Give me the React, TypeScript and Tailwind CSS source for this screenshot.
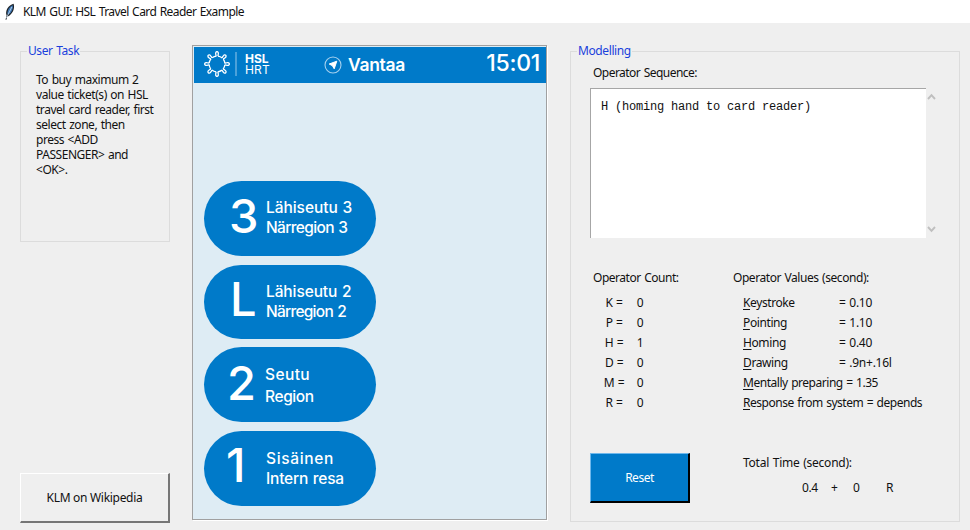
import type { ReactNode } from "react";

const counts = [
  { key: "K", value: 0 },
  { key: "P", value: 0 },
  { key: "H", value: 1 },
  { key: "D", value: 0 },
  { key: "M", value: 0 },
  { key: "R", value: 0 },
];

const values = [
  { first: "K", rest: "eystroke", value: "= 0.10", wide: false },
  { first: "P", rest: "ointing", value: "= 1.10", wide: false },
  { first: "H", rest: "oming", value: "= 0.40", wide: false },
  { first: "D", rest: "rawing", value: "= .9n+.16l", wide: false },
  { first: "M", rest: "entally preparing", value: "= 1.35", wide: true },
  { first: "R", rest: "esponse from system", value: "= depends", wide: true },
];

const zones = [
  { digit: "3", top: "Lähiseutu 3", bottom: "Närregion 3", box: "h-[75px]", digitBox: "pl-[25px] pb-[6px]", label: "pl-[62px] pb-[1px] leading-[20px]", topGap: "tracking-[-0.05px]", bottomGap: "tracking-[-0.65px]" },
  { digit: "L", top: "Lähiseutu 2", bottom: "Närregion 2", box: "mt-[9px] h-[74px]", digitBox: "pl-[26px] pb-[6px]", label: "pl-[62px] leading-[20px]", topGap: "tracking-[-0.1px]", bottomGap: "tracking-[-0.75px]" },
  { digit: "2", top: "Seutu", bottom: "Region", box: "mt-[8px] h-[75px]", digitBox: "pl-[23px] pb-[3px]", label: "pl-[61px] pt-[3px] leading-[22px]", topGap: "tracking-[0.4px]", bottomGap: "tracking-[-0.4px]" },
  { digit: "1", top: "Sisäinen", bottom: "Intern resa", box: "mt-[9px] h-[75px]", digitBox: "pl-[22px] pb-[8px]", label: "pl-[62px] pt-[1px] leading-[20px]", topGap: "tracking-[0.65px]", bottomGap: "tracking-[-0.2px]" },
];

function Feather() {
  return (
    <svg width="12" height="18" viewBox="0 0 12 18" className="shrink-0">
      <path d="M1.5 16.8 L2.6 12.5 C0.8 8 4.5 2 9.6 0.8 C10.8 4.5 9.8 9.5 5 13 L3.2 13.4 L2.4 16.8 Z" fill="#1d2227" />
      <path d="M3.4 11 C3.2 7 5.6 3.4 8.8 2.2 C9.4 5.5 8 9.4 4.6 11.6 Z" fill="#3e78b5" />
      <path d="M2.4 15 L7.8 4" stroke="#c9dced" strokeWidth="0.8" fill="none" />
    </svg>
  );
}

function Sun() {
  const angles = [0, 45, 90, 135, 180, 225, 270, 315];
  return (
    <svg width="26" height="26" viewBox="-13 -13 26 26" fill="none" stroke="#fff" strokeWidth="1.3">
      <circle r="7.9" strokeDasharray="4.7 1.505" strokeDashoffset="-0.75" />
      {angles.map((a) => (
        <path key={a} transform={`rotate(${a})`} d="M-0.9 -7.8 L-1.3 -10.2 A1.35 1.7 0 1 1 1.3 -10.2 L0.9 -7.8" />
      ))}
    </svg>
  );
}

function Frame({ title, className, children }: { title: string; className: string; children: ReactNode }) {
  return (
    <fieldset className={`min-w-0 border border-[#dcdcdc] ${className}`}>
      <legend className="ml-[6px] h-[14px] px-px text-[12px] leading-[14px] tracking-[-0.4px] whitespace-nowrap text-[#1a3fdc]">{title}</legend>
      {children}
    </fieldset>
  );
}

function CardReader() {
  return (
    <section className="mt-[22px] h-[475px] w-[355px] shrink-0 border border-[#a0a0a0] bg-[#deecf4] tracking-normal shadow-[1px_1px_0_#ffffff]">
      <header className="flex h-[37px] items-center border-t border-l border-[#deecf4] bg-[#007ac9] text-white">
        <div className="ml-[10px] -translate-y-px"><Sun /></div>
        <div className="ml-[5px] h-6 w-[2px] -translate-y-px bg-[#4ba1da]" />
        <div className="ml-[8px] w-[26px] pb-[2px] font-['Inter'] text-[12px]">
          <div className="h-[11px] leading-[11px] font-bold">HSL</div>
          <div className="h-[11px] leading-[11px] tracking-[0.2px]">HRT</div>
        </div>
        <svg width="18" height="18" viewBox="0 0 18 18" className="ml-[53px]">
          <circle cx="9" cy="9" r="8" fill="none" stroke="#a5d0ee" strokeWidth="1.1" />
          <path d="M12.8 5.2 L10.2 12.8 L8.4 9.7 L5.2 8 Z" fill="#fff" stroke="#fff" strokeWidth="1" strokeLinejoin="round" />
        </svg>
        <div className="ml-[6px] w-[60px] font-['Inter'] text-[17.5px] font-semibold tracking-[-0.3px] whitespace-nowrap">Vantaa</div>
        <div className="mr-[6px] ml-auto pb-[4px] font-['Inter'] text-[23px] leading-[28px] font-medium tracking-[-0.3px] whitespace-nowrap">15:01</div>
      </header>
      <div className="ml-[11px] pt-[98px]">
        {zones.map((z) => (
          <div key={z.digit} className={`grid w-[172px] items-center rounded-[38px] bg-[#007ac9] text-white ${z.box}`}>
            <div className={`col-start-1 row-start-1 font-['Inter'] text-[47px] leading-[48px] font-medium ${z.digitBox}`}>{z.digit}</div>
            <div className={`col-start-1 row-start-1 font-['Inter'] text-[15.5px] font-medium whitespace-nowrap ${z.label}`}>
              <div className={z.topGap}>{z.top}</div>
              <div className={z.bottomGap}>{z.bottom}</div>
            </div>
          </div>
        ))}
      </div>
    </section>
  );
}

function Modelling() {
  return (
    <Frame title="Modelling" className="mt-[21px] ml-[23px] h-[478px] w-[390px] shrink-0">
      <div className="pl-[19px]">
        <div className="mt-[7px] ml-[3px] leading-[16px] tracking-[-0.53px]">Operator Sequence:</div>
        <div className="mt-[7px] flex h-[150px]">
          <div className="w-[336px] border-t border-l border-[#a6a6a6] bg-white pt-[10px] pl-[10px] font-['Liberation_Mono',monospace] text-[12px] leading-[16px] tracking-[-0.2px] whitespace-nowrap [word-spacing:0px]">
            H (homing hand to card reader)
          </div>
          <div className="flex flex-col justify-between py-[5px] pl-[1px]">
            <svg width="9" height="8" viewBox="0 0 9 8" fill="none" stroke="#bfbfbf" strokeWidth="1.9"><path d="M1 6 L4.5 2.2 L8 6" /></svg>
            <svg width="9" height="8" viewBox="0 0 9 8" fill="none" stroke="#bfbfbf" strokeWidth="1.9"><path d="M1 2 L4.5 5.8 L8 2" /></svg>
          </div>
        </div>
        <div className="mt-[32px] flex">
          <div className="w-[140px] pl-[3px]">
            <div className="mb-[7px] leading-[16px]">Operator Count:</div>
            {counts.map((c) => (
              <div key={c.key} className="flex h-5 items-center">
                <div className="w-[42px] text-center">{c.key} =</div>
                <div className="w-[10px] text-center">{c.value}</div>
              </div>
            ))}
          </div>
          <div className="pl-[3px]">
            <div className="mb-[7px] leading-[16px] tracking-[-0.44px]">Operator Values (second):</div>
            {values.map((v) => (
              <div key={v.first} className="ml-[10px] flex h-5 items-center whitespace-pre">
                <div className={v.wide ? "" : "w-[96px] tracking-[-0.4px]"}>
                  <span className="underline underline-offset-2">{v.first}</span>{v.rest}{v.wide ? " " : ""}
                </div>
                <div className={v.wide ? "" : "tracking-[-0.25px]"}>{v.value}</div>
              </div>
            ))}
          </div>
        </div>
        <div className="mt-[40px] flex">
          <button className="h-[50px] w-[100px] border-t border-r-2 border-b-2 border-l border-t-[#6fb8ec] border-r-black border-b-black border-l-[#6fb8ec] bg-[#007ac9] text-white">Reset</button>
          <div className="ml-[53px] pt-[2px]">
            <div className="leading-[16px] tracking-[-0.24px]">Total Time (second):</div>
            <div className="mt-[9px] flex leading-[16px]">
              <div className="ml-[59px] w-[29px]">0.4</div>
              <div className="w-[22px]">+</div>
              <div className="w-[33px]">0</div>
              <div>R</div>
            </div>
          </div>
        </div>
      </div>
    </Frame>
  );
}

export default function App() {
  return (
    <div className="h-[530px] w-[970px] overflow-hidden bg-[#efefef] font-['Noto_Sans',sans-serif] text-[12px] tracking-[-0.47px] text-[#111] [word-spacing:0.8px]">
      <div className="flex h-[23px] items-center bg-white pl-1">
        <Feather />
        <div className="ml-[7px] leading-[16px] tracking-[-0.56px]">KLM GUI: HSL Travel Card Reader Example</div>
      </div>
      <main className="flex">
        <div className="mt-[21px] ml-[20px] flex h-[479px] w-[172px] shrink-0 flex-col">
          <Frame title="User Task" className="h-[198px] w-[150px]">
            <p className="mt-[14px] ml-[15px] leading-[15px] tracking-[-0.46px] whitespace-pre">
              {"To buy maximum 2\nvalue ticket(s) on HSL\ntravel card reader, first\nselect zone, then\npress <ADD\nPASSENGER> and\n<OK>."}
            </p>
          </Frame>
          <button className="mt-auto h-[50px] w-[150px] border-t border-r-2 border-b-2 border-l border-t-white border-r-[#767676] border-b-[#767676] border-l-white tracking-[-0.3px]">KLM on Wikipedia</button>
        </div>
        <CardReader />
        <Modelling />
      </main>
    </div>
  );
}
